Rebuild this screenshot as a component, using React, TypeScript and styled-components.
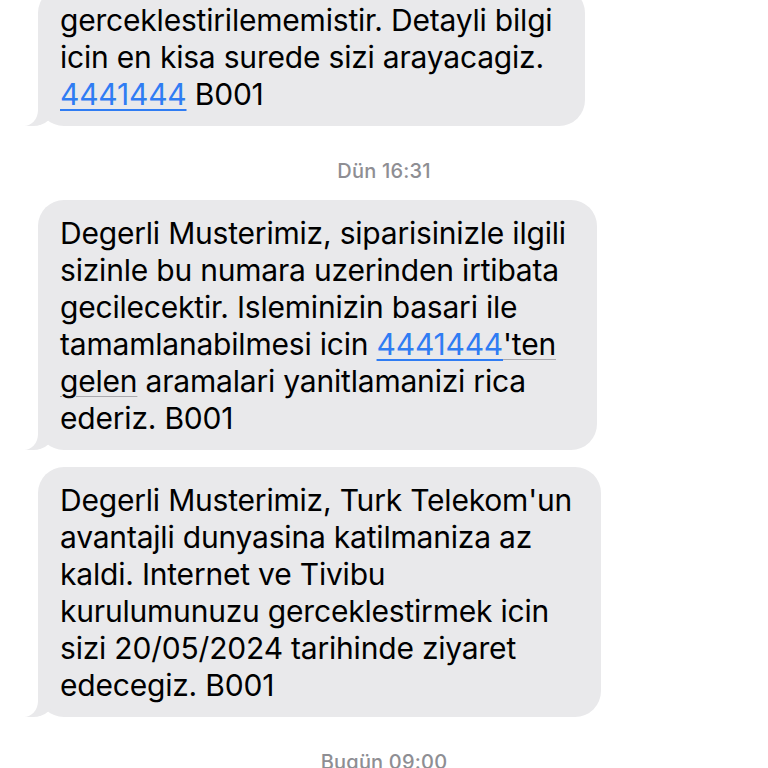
import * as React from "react";
import styled, {createGlobalStyle} from "styled-components";

const GlobalStyle = createGlobalStyle`
  html, body {
    margin: 0;
    padding: 0;
    background: #ffffff;
    overflow: hidden;
  }
  body {
    font-family: Inter, "Noto Sans", "Liberation Sans", sans-serif;
    -webkit-font-smoothing: antialiased;
  }
`;

const Thread = styled.div`
  display: flex;
  flex-direction: column;
  align-items: flex-start;
  width: 768px;
  height: 768px;
  overflow: hidden;
  padding-left: 38px;
  box-sizing: border-box;
`;

const Stack = styled.div<{$offset?: number}>`
  display: flex;
  flex-direction: column;
  align-items: flex-start;
  gap: 17px;
  margin-top: ${(p) => p.$offset ?? 0}px;
`;

const Bubble = styled.div<{$width: number}>`
  position: relative;
  width: ${(p) => p.$width}px;
  box-sizing: border-box;
  padding: 15px 10px 13px 22px;
  background: #e9e9eb;
  border-radius: 26px;
  color: #000000;
  font-size: 30px;
  line-height: 37px;
  letter-spacing: -0.2px;
  white-space: nowrap;

  &::before {
    content: "";
    position: absolute;
    bottom: 0;
    left: -13px;
    width: 30px;
    height: 26px;
    background: #e9e9eb;
    border-bottom-right-radius: 22px 20px;
  }

  &::after {
    content: "";
    position: absolute;
    bottom: 0;
    left: -20px;
    width: 20px;
    height: 28px;
    background: #ffffff;
    border-bottom-right-radius: 14px 16px;
  }
`;

const Line = styled.div`
  position: relative;
  z-index: 1;
`;

const Link = styled.span`
  color: #2f7cf3;
  text-decoration: underline;
  text-decoration-thickness: 2px;
  text-underline-offset: 4px;
`;

const Detected = styled.span`
  text-decoration: underline;
  text-decoration-color: #a9a9ae;
  text-decoration-thickness: 1px;
  text-underline-offset: 4px;
`;

const Stamp = styled.div`
  align-self: center;
  margin-left: -38px;
  padding: 33px 0 17px;
  color: #8e8e93;
  font-size: 20px;
  font-weight: 500;
  line-height: 24px;
  letter-spacing: 0.2px;
`;

export default function App() {
  return (
    <>
      <GlobalStyle />
      <Thread>
        <Stack $offset={-13}>
          <Bubble $width={547}>
            <Line>gerceklestirilememistir. Detayli bilgi</Line>
            <Line>icin en kisa surede sizi arayacagiz.</Line>
            <Line>
              <Link>4441444</Link> B001
            </Line>
          </Bubble>
        </Stack>
        <Stamp>Dün 16:31</Stamp>
        <Stack>
          <Bubble $width={559}>
            <Line>Degerli Musterimiz, siparisinizle ilgili</Line>
            <Line>sizinle bu numara uzerinden irtibata</Line>
            <Line>gecilecektir. Isleminizin basari ile</Line>
            <Line>
              tamamlanabilmesi icin <Link>4441444</Link>
              <Detected>'ten</Detected>
            </Line>
            <Line>
              <Detected>gelen</Detected> aramalari yanitlamanizi rica
            </Line>
            <Line>ederiz. B001</Line>
          </Bubble>
          <Bubble $width={563}>
            <Line>Degerli Musterimiz, Turk Telekom'un</Line>
            <Line>avantajli dunyasina katilmaniza az</Line>
            <Line>kaldi. Internet ve Tivibu</Line>
            <Line>kurulumunuzu gerceklestirmek icin</Line>
            <Line>sizi 20/05/2024 tarihinde ziyaret</Line>
            <Line>edecegiz. B001</Line>
          </Bubble>
        </Stack>
        <Stamp>Bugün 09:00</Stamp>
      </Thread>
    </>
  );
}
